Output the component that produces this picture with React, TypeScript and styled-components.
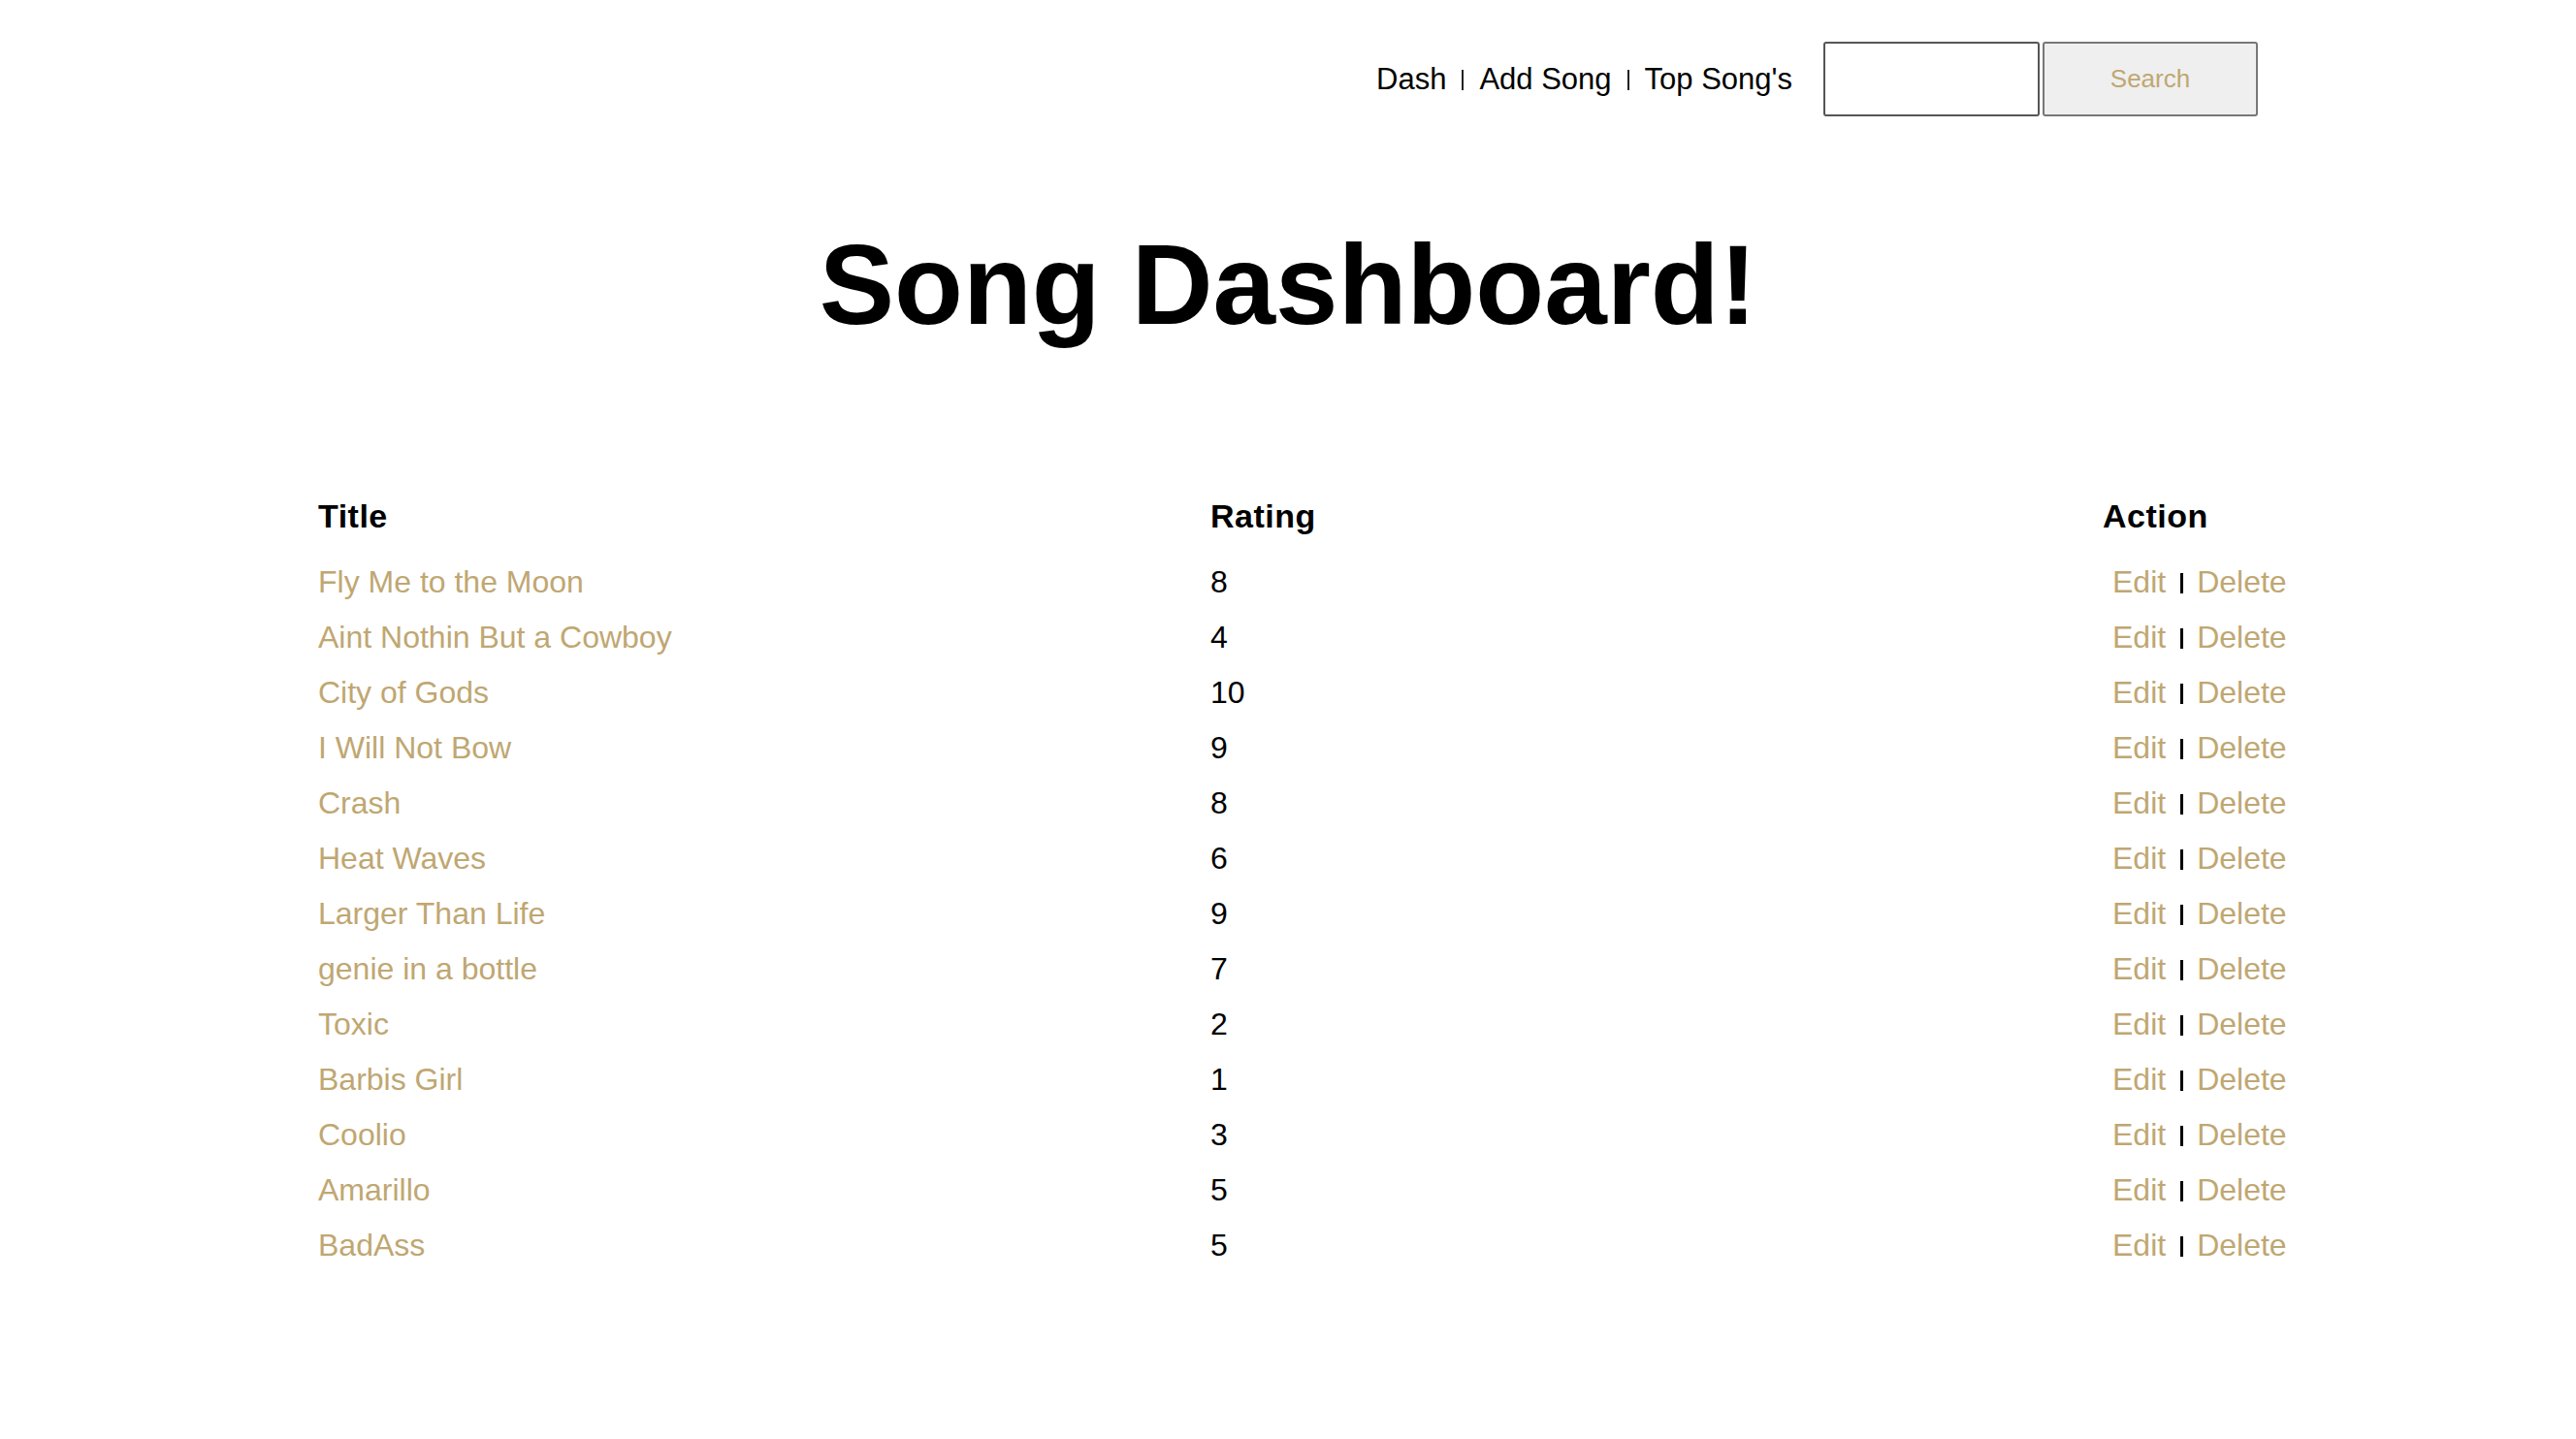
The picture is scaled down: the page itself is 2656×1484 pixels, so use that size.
import React from "react";
import styled, { createGlobalStyle } from "styled-components";

const GlobalStyle = createGlobalStyle`
  html, body {
    margin: 0;
    padding: 0;
    background: #ffffff;
  }
  body {
    font-family: "Liberation Sans", Arial, sans-serif;
    color: #000;
  }
`;

const Page = styled.div`
  width: 2000px;
  margin: 0 auto;
  padding-top: 43px;
  padding-bottom: 120px;
`;

const NavBar = styled.nav`
  display: flex;
  justify-content: flex-end;
  align-items: center;
  height: 77px;
`;

const NavLinks = styled.div`
  display: flex;
  align-items: center;
  font-size: 31px;
  margin-right: 32px;
`;

const NavLink = styled.a`
  color: #000;
  text-decoration: none;
`;

const NavSep = styled.span`
  display: inline-block;
  width: 2px;
  height: 21px;
  background: #222;
  margin: 2px 16px 0;
`;

const SearchForm = styled.form`
  display: flex;
  gap: 3px;
  height: 77px;
`;

const SearchInput = styled.input`
  box-sizing: border-box;
  width: 223px;
  height: 77px;
  border: 2px solid #555;
  border-radius: 3px;
  background: #fff;
`;

const SearchButton = styled.button`
  box-sizing: border-box;
  width: 222px;
  height: 77px;
  border: 2px solid #777;
  border-radius: 3px;
  background: #efefef;
  color: #bfa772;
  font-family: "Liberation Sans", Arial, sans-serif;
  font-size: 26px;
`;

const Heading = styled.h1`
  margin: 116px 0 0;
  font-size: 116px;
  line-height: 1;
  font-weight: 700;
  text-align: center;
  letter-spacing: 0;
`;

const Table = styled.div`
  margin-top: 152px;
  display: flex;
  flex-direction: column;
`;

const Row = styled.div<{ $head?: boolean }>`
  display: grid;
  grid-template-columns: 920px 920px 160px;
  height: 57px;
  line-height: 57px;
  font-size: ${(p) => (p.$head ? "34px" : "32px")};
  letter-spacing: ${(p) => (p.$head ? "0.5px" : "0")};
  font-weight: ${(p) => (p.$head ? 700 : 400)};
  margin-bottom: ${(p) => (p.$head ? "11px" : "0")};
  white-space: nowrap;
`;

const Cell = styled.div<{ $gold?: boolean; $pad?: boolean }>`
  color: ${(p) => (p.$gold ? "#bfa772" : "#000")};
  padding-left: ${(p) => (p.$pad ? "10px" : "0")};
`;

const ActionLink = styled.a`
  color: #bfa772;
  text-decoration: none;
`;

const ActionSep = styled.span`
  display: inline-block;
  width: 3px;
  height: 21px;
  background: #000;
  margin: 0 14px 0 15px;
  vertical-align: -1px;
`;

const songs: [string, number][] = [
  ["Fly Me to the Moon", 8],
  ["Aint Nothin But a Cowboy", 4],
  ["City of Gods", 10],
  ["I Will Not Bow", 9],
  ["Crash", 8],
  ["Heat Waves", 6],
  ["Larger Than Life", 9],
  ["genie in a bottle", 7],
  ["Toxic", 2],
  ["Barbis Girl", 1],
  ["Coolio", 3],
  ["Amarillo", 5],
  ["BadAss", 5],
];

export default function App() {
  return (
    <>
      <GlobalStyle />
      <Page>
        <NavBar>
          <NavLinks>
            <NavLink href="#">Dash</NavLink>
            <NavSep />
            <NavLink href="#">Add Song</NavLink>
            <NavSep />
            <NavLink href="#">Top Song's</NavLink>
          </NavLinks>
          <SearchForm onSubmit={(e) => e.preventDefault()}>
            <SearchInput type="text" />
            <SearchButton type="submit">Search</SearchButton>
          </SearchForm>
        </NavBar>
        <Heading>Song Dashboard!</Heading>
        <Table>
          <Row $head>
            <Cell>Title</Cell>
            <Cell>Rating</Cell>
            <Cell>Action</Cell>
          </Row>
          {songs.map(([title, rating]) => (
            <Row key={title}>
              <Cell $gold>{title}</Cell>
              <Cell>{rating}</Cell>
              <Cell $pad>
                <ActionLink href="#">Edit</ActionLink>
                <ActionSep />
                <ActionLink href="#">Delete</ActionLink>
              </Cell>
            </Row>
          ))}
        </Table>
      </Page>
    </>
  );
}
